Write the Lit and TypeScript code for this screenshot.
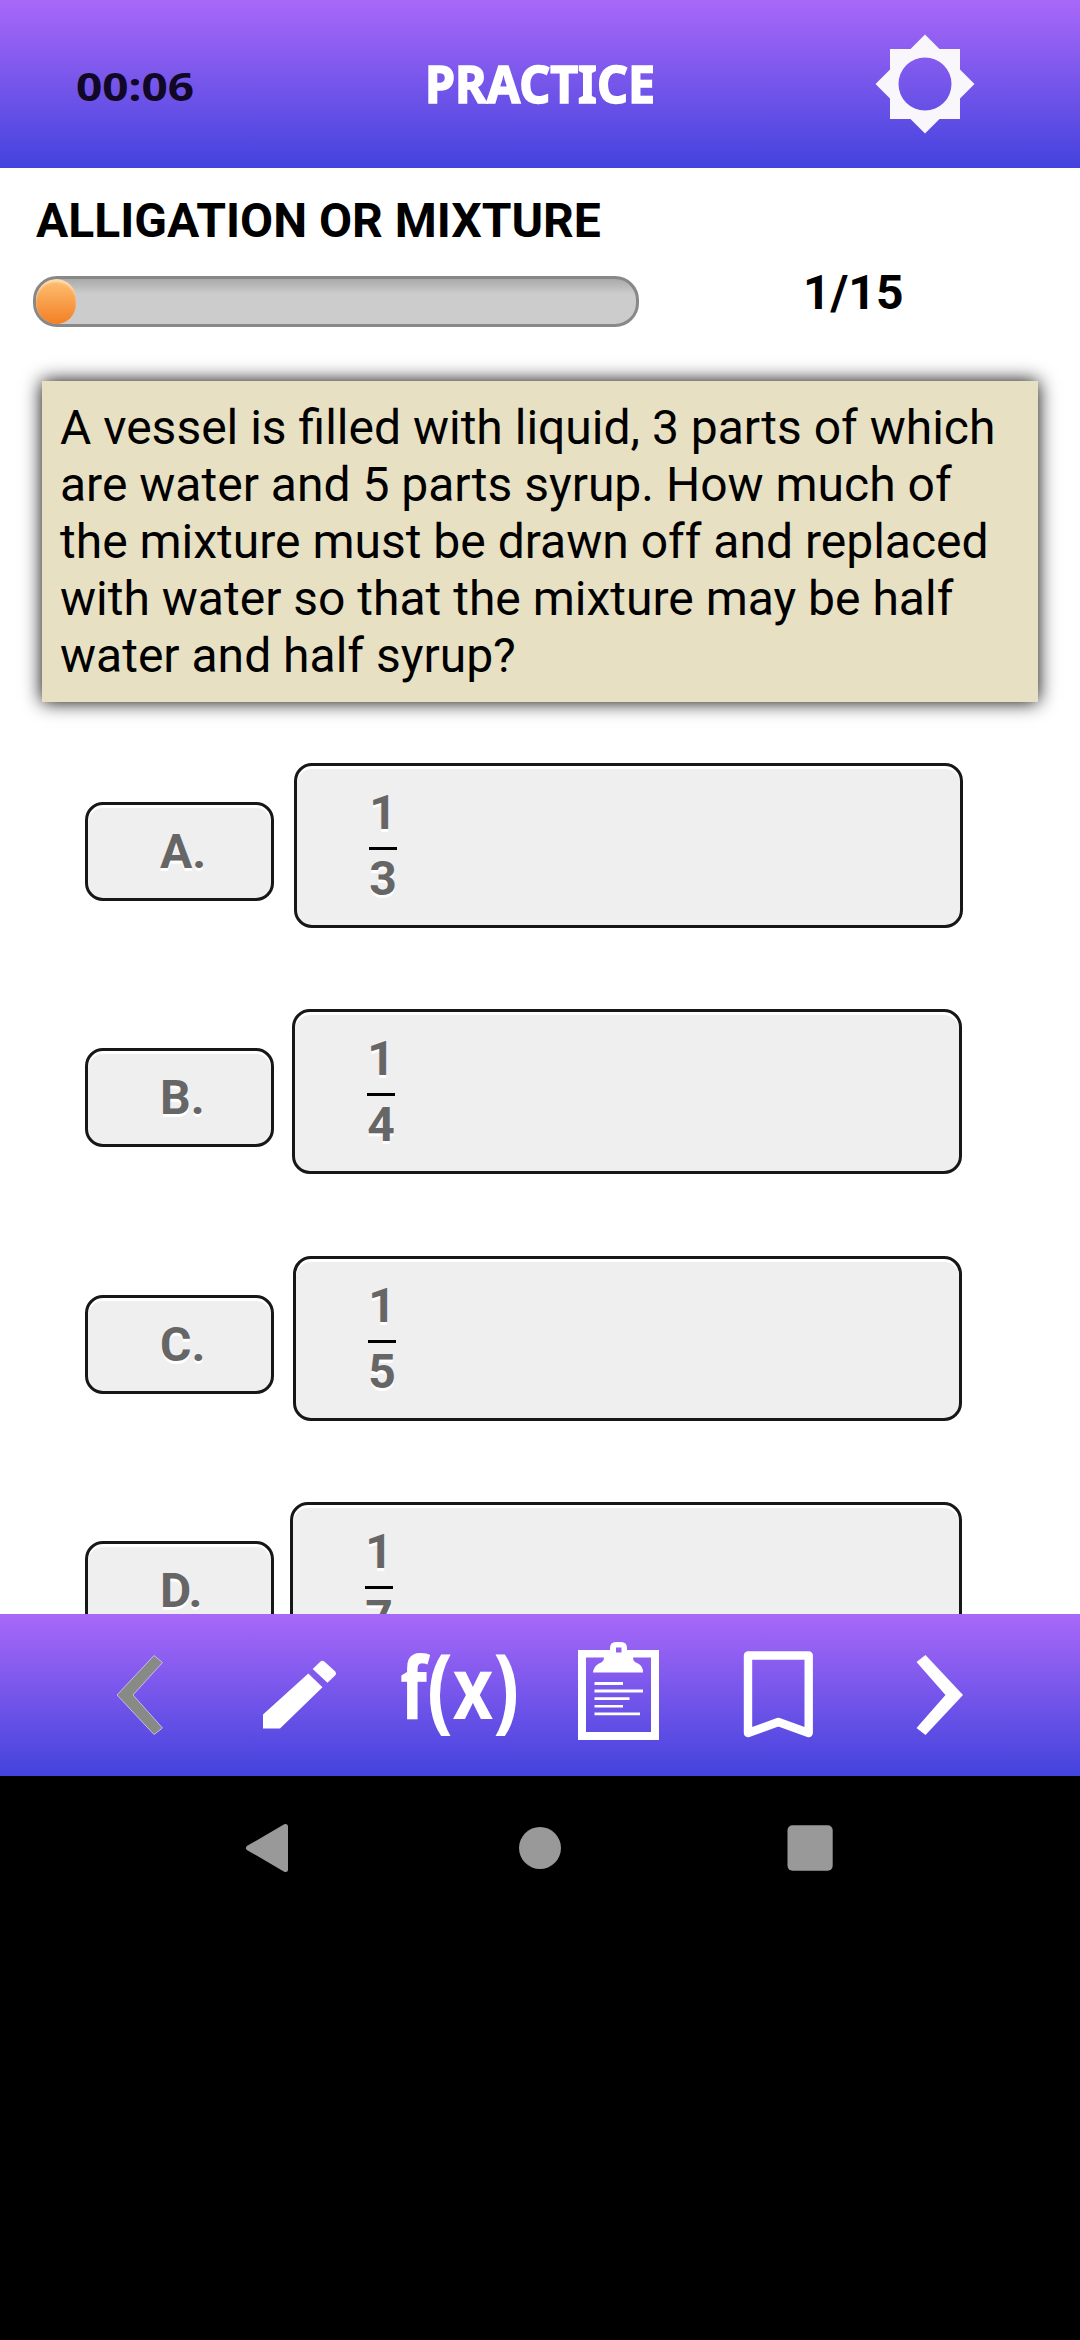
import { LitElement, html, css } from "lit";
import { customElement } from "lit/decorators.js";

interface Option { letter: string; num: string; den: string; kind: string; }

@customElement("app-root")
export class AppRoot extends LitElement {
  static styles = css`
    :host { display: flex; flex-direction: column; width: 1080px; height: 2340px; background: #000; font-family: Roboto, "Liberation Sans", sans-serif; color: #000; font-size: 48px; overflow: hidden; }
    * { box-sizing: border-box; }
    svg { display: block; }
    .bar { background: linear-gradient(#a868f8, #4343dd); flex: none; }
    .head { height: 168px; display: grid; grid-template-columns: 270px 540px 230px; align-items: center; justify-items: center; }
    .timer { padding-top: 12px; }
    .timer svg, .title svg { overflow: visible; }
    .head text, .fx { font-family: "Noto Sans", sans-serif; font-weight: 700; }
    .body { height: 1446px; flex: none; overflow: hidden; background: #fff; display: flex; flex-direction: column; }
    .topic { margin: 25px 0 0 36px; font-weight: 700; line-height: 56px; white-space: nowrap; height: 56px; }
    .progress { display: flex; margin: 27px 0 0 33px; height: 51px; }
    .track { width: 606px; height: 51px; border: 3px solid #888; border-radius: 24px; background: linear-gradient(#aaa, #ccc 15px); overflow: hidden; }
    .fill { height: 45px; border-radius: 22px; background: linear-gradient(#fdc173, #f47f25); box-shadow: inset 0 3px 2px rgba(255,255,255,.45); }
    .count { margin: -11px 0 0 164px; font-weight: 700; line-height: 56px; white-space: nowrap; }
    .question { margin: 54px 42px 0; height: 321px; flex: none; background: #e8e0c2; box-shadow: 0 0 18px 0 #000; padding: 18px; line-height: 57px; white-space: nowrap; }
    .options { display: flex; flex-direction: column; margin: 61px 0 0 85px; gap: 81px; flex: none; }
    .row { display: flex; height: 165px; align-items: center; }
    .btn { background: #efefef; border: 3px solid #171717; border-radius: 18px; box-shadow: inset 0 3px 0 #fff; text-shadow: 0 3px 0 #fff; color: #666; font-weight: 700; }
    .letter { width: 189px; height: 99px; padding-left: 72px; line-height: 93px; margin-top: 12px; }
    .answer { height: 165px; width: 669px; padding: 22px 0 0 72px; margin-left: 20px; }
    .b .answer { width: 670px; margin-left: 18px; }
    .c .answer { margin-left: 19px; }
    .c { margin-top: 1px; }
    .d .answer { width: 672px; margin-left: 16px; }
    .frac { display: flex; flex-direction: column; align-items: center; width: 28px; }
    .frac span { line-height: 49px; height: 59px; }
    .rule { width: 28px; height: 3px; background: #000; }
    .frac .den { height: 56px; margin-top: 4px; }
    .tools { height: 162px; }
    .nav { height: 144px; }
  `;

  private options: Option[] = [
    { letter: "A.", num: "1", den: "3", kind: "a" },
    { letter: "B.", num: "1", den: "4", kind: "b" },
    { letter: "C.", num: "1", den: "5", kind: "c" },
    { letter: "D.", num: "1", den: "7", kind: "d" },
  ];
  private lines = [
    "A vessel is filled with liquid, 3 parts of which",
    "are water and 5 parts syrup. How much of",
    "the mixture must be drawn off and replaced",
    "with water so that the mixture may be half",
    "water and half syrup?",
  ];

  render() {
    return html`
      <header class="bar head">
        <div class="timer"><svg width="118" height="50"><text x="0" y="36" font-size="40" fill="#100824" textLength="118" lengthAdjust="spacingAndGlyphs">00:06</text></svg></div>
        <div class="title"><svg width="228" height="60"><text x="-1" y="49" font-size="52" fill="#fff" stroke="#fff" stroke-width="1.6" textLength="230" lengthAdjust="spacingAndGlyphs">PRACTICE</text></svg></div>
        <svg width="100" height="100" viewBox="-50 -50 100 100"><path fill="#f9f7fb" fill-rule="evenodd" d="M0-49.5L14.5-35H35V-14.5L49.5 0L35 14.5V35H14.5L0 49.5L-14.5 35H-35V14.5L-49.5 0L-35-14.5V-35H-14.5ZM0-26.5A26.5 26.5 0 1 0 0 26.5A26.5 26.5 0 1 0 0-26.5Z"/></svg>
      </header>
      <main class="body">
        <div class="topic">ALLIGATION OR MIXTURE</div>
        <div class="progress">
          <div class="track"><div class="fill" style="width:${600 / 15}px"></div></div>
          <div class="count">1/15</div>
        </div>
        <div class="question">${this.lines.map((l) => html`<div>${l}</div>`)}</div>
        <div class="options">
          ${this.options.map((o) => html`
            <div class="row ${o.kind}">
              <div class="btn letter">${o.letter}</div>
              <div class="btn answer"><div class="frac"><span>${o.num}</span><div class="rule"></div><span class="den">${o.den}</span></div></div>
            </div>`)}
        </div>
      </main>
      <footer class="bar tools">
        <svg width="1080" height="162" viewBox="0 1614 1080 162" fill="#fff">
          <path fill="#888a85" stroke="#c5bce5" stroke-width="1" d="M154 1655.5L162.5 1662.5L133 1695L162.5 1728L154 1734.5L117 1695Z"/>
          <path d="M263 1714.5L308.3 1673.5L322.5 1687.3L280 1728.5H263ZM312.7 1669L320.5 1661.5Q322.4 1660 324.3 1661.5L335.3 1671.5Q337 1673.5 335.3 1675.3L327.5 1682.7Z"/>
          <text class="fx" font-size="86" x="400" y="1719" textLength="119" lengthAdjust="spacingAndGlyphs">f<tspan font-size="94" dy="2">(</tspan><tspan dy="-2">x</tspan><tspan font-size="94" dy="2">)</tspan></text>
          <path fill-rule="evenodd" d="M578 1650H610V1648Q610 1642 616 1642H621Q627 1642 627 1648V1650H659V1740H578ZM586 1657.5V1732H651V1657.5H633Q633 1662 638 1663.5Q643 1666 643 1672.5H593Q594 1666 599 1663.5Q604 1662 604 1657.5ZM616 1647.5V1652.5H621.5V1647.5ZM594.5 1682H623V1685H594.5ZM594.5 1689.6H643V1692.4H594.5ZM594.5 1697.3H629.5V1700H594.5ZM594.5 1705H623V1707.6H594.5ZM594.5 1712.5H640V1715.2H594.5Z"/>
          <path fill="none" stroke="#fff" stroke-width="8.4" stroke-linejoin="round" d="M748 1655.5H808.7V1733L778.3 1722L748 1733Z"/>
          <path d="M925.5 1655L963 1695L925.5 1735L916.5 1728L945.5 1695L916.5 1662Z"/>
        </svg>
      </footer>
      <nav class="nav">
        <svg width="1080" height="144" viewBox="0 1776 1080 144" fill="#999">
          <path stroke="#999" stroke-width="5" stroke-linejoin="round" d="M248.5 1848L285.5 1826.5V1869.5Z"/>
          <circle cx="540" cy="1848" r="21"/>
          <rect x="787.5" y="1825.3" width="45.2" height="45.4" rx="5"/>
        </svg>
      </nav>`;
  }
}
